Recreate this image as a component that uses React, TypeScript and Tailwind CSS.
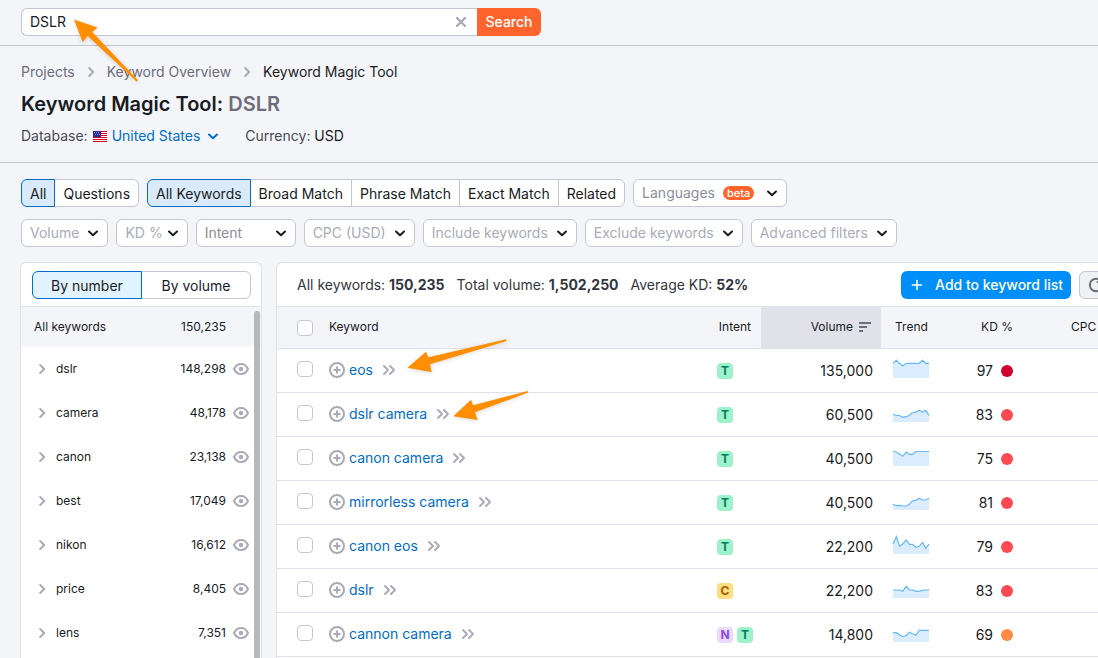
import { useState } from 'react';
import { clsx } from 'clsx';

type Intent = 'T' | 'C' | 'N';

interface KeywordRow {
  keyword: string;
  intents: Intent[];
  volume: string;
  trend: number[];
  kd: number;
}

const GROUPS = [
  { name: 'dslr', count: '148,298' },
  { name: 'camera', count: '48,178' },
  { name: 'canon', count: '23,138' },
  { name: 'best', count: '17,049' },
  { name: 'nikon', count: '16,612' },
  { name: 'price', count: '8,405' },
  { name: 'lens', count: '7,351' },
];

const ROWS: KeywordRow[] = [
  { keyword: 'eos', intents: ['T'], volume: '135,000', kd: 97, trend: [14.7, 17.7, 14.7, 12, 14.7, 14.7, 14.7, 14.7, 14.7, 17.7, 14.7, 14.7] },
  { keyword: 'dslr camera', intents: ['T'], volume: '60,500', kd: 83, trend: [7.7, 6.5, 6.5, 4.7, 5.3, 6.7, 9.5, 9.8, 11.7, 10, 11.7, 6.7] },
  { keyword: 'canon camera', intents: ['T'], volume: '40,500', kd: 75, trend: [14.5, 14, 12, 9.7, 14, 11.7, 11.7, 14.5, 14.5, 14.5, 14.5, 14.5] },
  { keyword: 'mirrorless camera', intents: ['T'], volume: '40,500', kd: 81, trend: [5.7, 4.3, 4.7, 4, 4, 5.7, 9.3, 9.7, 11.7, 10, 10, 11.7] },
  { keyword: 'canon eos', intents: ['T'], volume: '22,200', kd: 79, trend: [9.7, 17.3, 8, 10, 14, 9.7, 9.7, 6.7, 7.7, 11.7, 5.7, 10] },
  { keyword: 'dslr', intents: ['C'], volume: '22,200', kd: 83, trend: [8, 8, 8, 6.7, 11.7, 8, 8, 6.7, 6.7, 7.7, 8, 8] },
  { keyword: 'cannon camera', intents: ['N', 'T'], volume: '14,800', kd: 69, trend: [9.3, 9.3, 7.3, 5.3, 6.3, 9.7, 8.3, 6.7, 11.7, 11.7, 11.7, 11.7] },
];

const INTENT_STYLES: Record<Intent, string> = {
  T: 'bg-[#9ef2c9] text-[#007c65]',
  C: 'bg-[#fcdf7e] text-[#a75800]',
  N: 'bg-[#edd9ff] text-[#8649e1]',
};

const kdColor = (kd: number) => {
  if (kd >= 85) return 'bg-[#d1002f]';
  if (kd >= 70) return 'bg-[#ff4953]';
  return 'bg-[#ff8c43]';
};

const ChevronDown = ({ className }: { className?: string }) => (
  <svg viewBox="0 0 12 12" className={clsx('size-3 shrink-0', className)} fill="none" stroke="currentColor" strokeWidth="2" strokeLinecap="round" strokeLinejoin="round">
    <path d="M2 4.500 6 8.200 10 4.500" />
  </svg>
);

const ChevronRight = () => (
  <svg viewBox="0 0 8 12" className="h-3 w-2 shrink-0 text-[#a9abb6]" fill="none" stroke="currentColor" strokeWidth="2" strokeLinecap="round" strokeLinejoin="round">
    <path d="M2.200 2 6.200 6 2.200 10" />
  </svg>
);

const DoubleChevron = () => (
  <svg viewBox="0 0 14 12" className="h-3 w-3.5" fill="none" stroke="currentColor" strokeWidth="1.900" strokeLinecap="round" strokeLinejoin="round">
    <path d="M2 2 6 6 2 10M8 2l4 4-4 4" />
  </svg>
);

const PlusCircle = () => (
  <svg viewBox="0 0 16 16" className="size-4" fill="none" stroke="currentColor" strokeWidth="2" strokeLinecap="round">
    <circle cx="8" cy="8" r="7" />
    <path d="M8 5.200v5.600M5.200 8h5.600" />
  </svg>
);

const Eye = () => (
  <svg viewBox="0 0 16 12" className="h-3 w-4" fill="none" stroke="currentColor" strokeWidth="2">
    <path d="M1 6C2.400 3 4.900 1 8 1S13.600 3 15 6C13.600 9 11.100 11 8 11S2.400 9 1 6Z" />
    <circle cx="8" cy="6" r="2.200" fill="currentColor" stroke="none" />
  </svg>
);

const Flag = () => (
  <svg viewBox="0 0 14 11" className="h-[11px] w-3.5" shapeRendering="crispEdges">
    <rect width="14" height="11" fill="#fff" />
    <path d="M0 0h14v1H0zM0 2h14v1H0zM0 4h14v1H0zM0 6h14v1H0zM0 8h14v1H0zM0 10h14v1H0z" fill="#d8001d" />
    <rect width="8" height="6" fill="#2a2a99" />
    <path d="M1 1h1v1H1zM3 1h1v1H3zM5 1h1v1H5zM2 3h1v1H2zM4 3h1v1H4zM6 3h1v1H6z" fill="#9a9ad6" />
  </svg>
);

const Sparkline = ({ points }: { points: number[] }) => {
  const step = 36 / (points.length - 1);
  const line = points.map((p, i) => `${(i * step).toFixed(1)},${(18 - p).toFixed(1)}`).join(' ');

  return (
    <svg viewBox="0 0 36 18" className="block h-[18px] w-9 overflow-visible">
      <polygon points={`0,18 ${line} 36,18`} fill="#dbecff" />
      <polyline points={line} fill="none" stroke="#66b8f8" strokeWidth="1.200" />
    </svg>
  );
};

interface SegmentedProps {
  label: string;
  options: string[];
  equal?: boolean;
  activeClass: string;
}

const Segmented = ({ label, options, equal, activeClass }: SegmentedProps) => {
  const [active, setActive] = useState(options[0]);

  return (
    <div role="group" aria-label={label} className={clsx('flex', equal && 'w-full')}>
      {options.map((option) => (
        <button
          key={option}
          type="button"
          aria-pressed={option === active}
          onClick={() => setActive(option)}
          className={clsx(
            'h-7 border px-2 pt-0.5 whitespace-nowrap first:rounded-l-md last:rounded-r-md not-first:-ml-px',
            equal && 'flex-1',
            option === active ? clsx('relative z-10 border-[#006dca]', activeClass) : 'border-[#c4c7cf] bg-white'
          )}
        >
          {option}
        </button>
      ))}
    </div>
  );
};

interface FilterProps {
  label: string;
  className?: string;
  badge?: string;
}

const Filter = ({ label, className = 'gap-2 text-[#a9abb6]', badge }: FilterProps) => (
  <button
    type="button"
    className={clsx('flex h-7 items-center justify-between rounded-md border border-[#c4c7cf] bg-white px-2 whitespace-nowrap', className)}
  >
    {label}
    {badge && <span className="mr-1 rounded-full bg-[#ff642d] px-1 text-[11px] leading-[14px] font-medium text-white">{badge}</span>}
    <ChevronDown className="text-[#191b23]" />
  </button>
);

const Checkbox = ({ label }: { label: string }) => (
  <input
    type="checkbox"
    aria-label={label}
    className="block size-4 appearance-none rounded border border-[#c4c7cf] bg-white checked:bg-[#008ff8]"
  />
);

const Arrows = () => (
  <svg viewBox="0 0 560 430" className="pointer-events-none absolute top-0 left-0 z-20 h-[430px] w-[560px] drop-shadow-sm" fill="#ff8f00">
    <path d="M74 19.500 97.500 27.500 92.300 32 138 80.300 136.700 81.700 87.700 36 82.700 42.300Z" />
    <path d="M407.500 367.700 426 351.700 428.300 357.300 506 339.300 506.700 340.900 430 364.300 431.700 372.200Z" />
    <path d="M453.300 416.300 471 399.700 473 405.300 527.700 391 528.300 392.600 475 412.300 477.700 419.900Z" />
  </svg>
);

const Sidebar = () => (
  <aside className="relative w-[242px] shrink-0 rounded-t-md border border-b-0 border-[#e0e1e9] bg-white">
    <div className="border-b border-[#e0e1e9] pt-2 pr-2.5 pb-[7px] pl-[11px]">
      <Segmented label="Group by" options={['By number', 'By volume']} equal activeClass="bg-[#e0f3ff]" />
    </div>
    <div className="flex h-10 items-center justify-between bg-[#f4f5f9] pr-[35px] pl-[13px] text-xs">
      <span>All keywords</span>
      <span>150,235</span>
    </div>
    <ul className="text-xs">
      {GROUPS.map(({ name, count }) => (
        <li key={name} className="flex h-11 items-center pr-3 pl-[17px]">
          <button type="button" className="flex flex-1 items-center gap-2.5">
            <ChevronRight />
            {name}
          </button>
          <span>{count}</span>
          <button type="button" aria-label={`Exclude ${name}`} className="ml-[7px] text-[#a9abb6]">
            <Eye />
          </button>
        </li>
      ))}
    </ul>
    <div className="absolute top-12 right-px bottom-0 w-1.5 rounded-t-full bg-[#b8b8ba]" />
  </aside>
);

const KeywordTable = () => (
  <table className="w-full table-fixed text-left">
    <thead className="bg-[#f4f5f9] text-xs">
      <tr className="h-[41px] border-b border-[#e0e1e9]">
        <th className="w-[52px] pt-0.5 pl-5">
          <Checkbox label="Select all keywords" />
        </th>
        <th className="font-normal">Keyword</th>
        <th className="w-16 pr-2.5 text-right font-normal">Intent</th>
        <th className="w-[120px] bg-[#e0e1e9] pr-2.5 font-normal">
          <button type="button" className="ml-auto flex items-center gap-1.5">
            Volume
            <svg viewBox="0 0 12 10" className="h-2.5 w-3 text-[#6c6e79]" fill="none" stroke="currentColor" strokeWidth="2">
              <path d="M0 1h12M0 5h8M0 9h4" />
            </svg>
          </button>
        </th>
        <th className="w-20 pl-3.5 font-normal">Trend</th>
        <th className="w-[62px] pr-2.5 text-right font-normal">KD %</th>
        <th className="w-[98px] pl-12 font-normal">CPC</th>
      </tr>
    </thead>
    <tbody>
      {ROWS.map(({ keyword, intents, volume, trend, kd }) => (
        <tr key={keyword} className="h-11 border-b border-[#e0e1e9]">
          <td className="pb-0.5 pl-5">
            <Checkbox label={`Select ${keyword}`} />
          </td>
          <td>
            <div className="flex items-center">
              <button type="button" aria-label={`Add ${keyword}`} className="mr-1 text-[#a9abb6]">
                <PlusCircle />
              </button>
              <a href="#" className="text-[#006dca]">
                {keyword}
              </a>
              <button type="button" aria-label={`Open ${keyword}`} className="ml-[9px] text-[#a9abb6]">
                <DoubleChevron />
              </button>
            </div>
          </td>
          <td className="pt-0.5 pl-5">
            <div className="flex gap-1">
              {intents.map((intent) => (
                <span
                  key={intent}
                  className={clsx('size-4 shrink-0 rounded text-center text-xs leading-4 font-bold', INTENT_STYLES[intent])}
                >
                  {intent}
                </span>
              ))}
            </div>
          </td>
          <td className="pt-0.5 pr-2 text-right">{volume}</td>
          <td className="pb-0.5 pl-3">
            <Sparkline points={trend} />
          </td>
          <td className="pt-0.5 pr-2.5">
            <div className="flex items-center justify-end gap-2">
              {kd}
              <span className={clsx('size-3 rounded-full', kdColor(kd))} />
            </div>
          </td>
          <td />
        </tr>
      ))}
    </tbody>
  </table>
);

const App = () => {
  const [query, setQuery] = useState('DSLR');

  return (
    <div className="relative flex min-h-screen flex-col overflow-hidden bg-[#f4f5f9] font-['Inter',sans-serif] text-sm text-[#191b23]">
      <header className="border-b border-[#c4c7cf] px-[21px] pt-2 pb-[9px]">
        <form className="flex w-[520px]" onSubmit={(e) => e.preventDefault()}>
          <div className="flex h-7 flex-1 items-center rounded-l-md border border-r-0 border-[#c4c7cf] bg-white px-2">
            <input
              type="text"
              aria-label="Keyword"
              value={query}
              onChange={(e) => setQuery(e.target.value)}
              className="min-w-0 flex-1 outline-none"
            />
            <button type="button" aria-label="Clear" onClick={() => setQuery('')} className="text-[#a9abb6]">
              <svg viewBox="0 0 16 16" className="size-4" fill="none" stroke="currentColor" strokeWidth="2.400" strokeLinecap="round">
                <path d="m4 4 8 8M12 4l-8 8" />
              </svg>
            </button>
          </div>
          <button type="submit" className="h-7 w-16 rounded-r-md bg-[#ff642d] font-medium text-white">
            Search
          </button>
        </form>
      </header>

      <section className="border-b border-[#c4c7cf] px-[21px] pt-4 pb-4">
        <nav aria-label="Breadcrumb" className="flex items-center gap-3 text-[#6c6e79]">
          <a href="#">Projects</a>
          <ChevronRight />
          <a href="#">Keyword Overview</a>
          <ChevronRight />
          <span className="text-[#191b23]">Keyword Magic Tool</span>
        </nav>
        <h1 className="mt-2 text-xl leading-7 font-semibold">
          Keyword Magic Tool: <span className="text-[#6c6e79]">DSLR</span>
        </h1>
        <div className="mt-2 flex items-center">
          <span className="mr-[5px] text-[#484a54]">Database:</span>
          <button type="button" className="flex items-center gap-[5px] text-[#006dca]">
            <Flag />
            United States
            <ChevronDown className="ml-0.5" />
          </button>
          <span className="ml-[26px]">
            <span className="text-[#484a54]">Currency:</span> USD
          </span>
        </div>
      </section>

      <section className="px-[21px] pt-4">
        <div className="flex gap-2">
          <Segmented label="Type" options={['All', 'Questions']} activeClass="bg-[#d9eafa]" />
          <Segmented
            label="Match"
            options={['All Keywords', 'Broad Match', 'Phrase Match', 'Exact Match', 'Related']}
            activeClass="bg-[#d9eafa]"
          />
          <Filter label="Languages" badge="beta" className="gap-2 text-[#8a8e9b]" />
        </div>
        <div className="mt-3 flex gap-2">
          <Filter label="Volume" />
          <Filter label="KD %" className="gap-1 text-[#a9abb6]" />
          <Filter label="Intent" className="w-[100px] text-[#8a8e9b]" />
          <Filter label="CPC (USD)" />
          <Filter label="Include keywords" />
          <Filter label="Exclude keywords" />
          <Filter label="Advanced filters" />
        </div>
      </section>

      <main className="-mr-[23px] flex flex-1 gap-3.5 pt-[15px] pl-5">
        <Sidebar />
        <section className="min-w-0 flex-1 rounded-tl-md border-t border-l border-[#e0e1e9] bg-white">
          <div className="flex items-center gap-2 border-b border-[#e0e1e9] pt-2 pr-2 pb-[7px] pl-5 whitespace-nowrap">
            <p className="flex flex-1 gap-3 text-[#333640]">
              <span>
                All keywords: <b>150,235</b>
              </span>
              <span>
                Total volume: <b>1,502,250</b>
              </span>
              <span>
                Average KD: <b>52%</b>
              </span>
            </p>
            <button type="button" className="flex h-7 items-center gap-2.5 rounded-md bg-[#008ff8] px-2 font-medium text-white">
              <svg viewBox="0 0 16 16" className="size-4" fill="none" stroke="currentColor" strokeWidth="1.600" strokeLinecap="round">
                <path d="M8 3.500v9M3.500 8h9" />
              </svg>
              Add to keyword list
            </button>
            <button type="button" aria-label="Refresh" className="flex h-7 items-center rounded-md border border-[#c4c7cf] bg-[#f0f1f4] px-2 text-[#6c6e79]">
              <svg viewBox="0 0 16 16" className="size-4" fill="none" stroke="currentColor" strokeWidth="2" strokeLinecap="round">
                <path d="M13.500 11A6.200 6.200 0 1 1 12.500 3.600" />
                <path d="M13.500 1v4h-4" />
              </svg>
            </button>
          </div>
          <KeywordTable />
        </section>
      </main>

      <Arrows />
    </div>
  );
};

export default App;
